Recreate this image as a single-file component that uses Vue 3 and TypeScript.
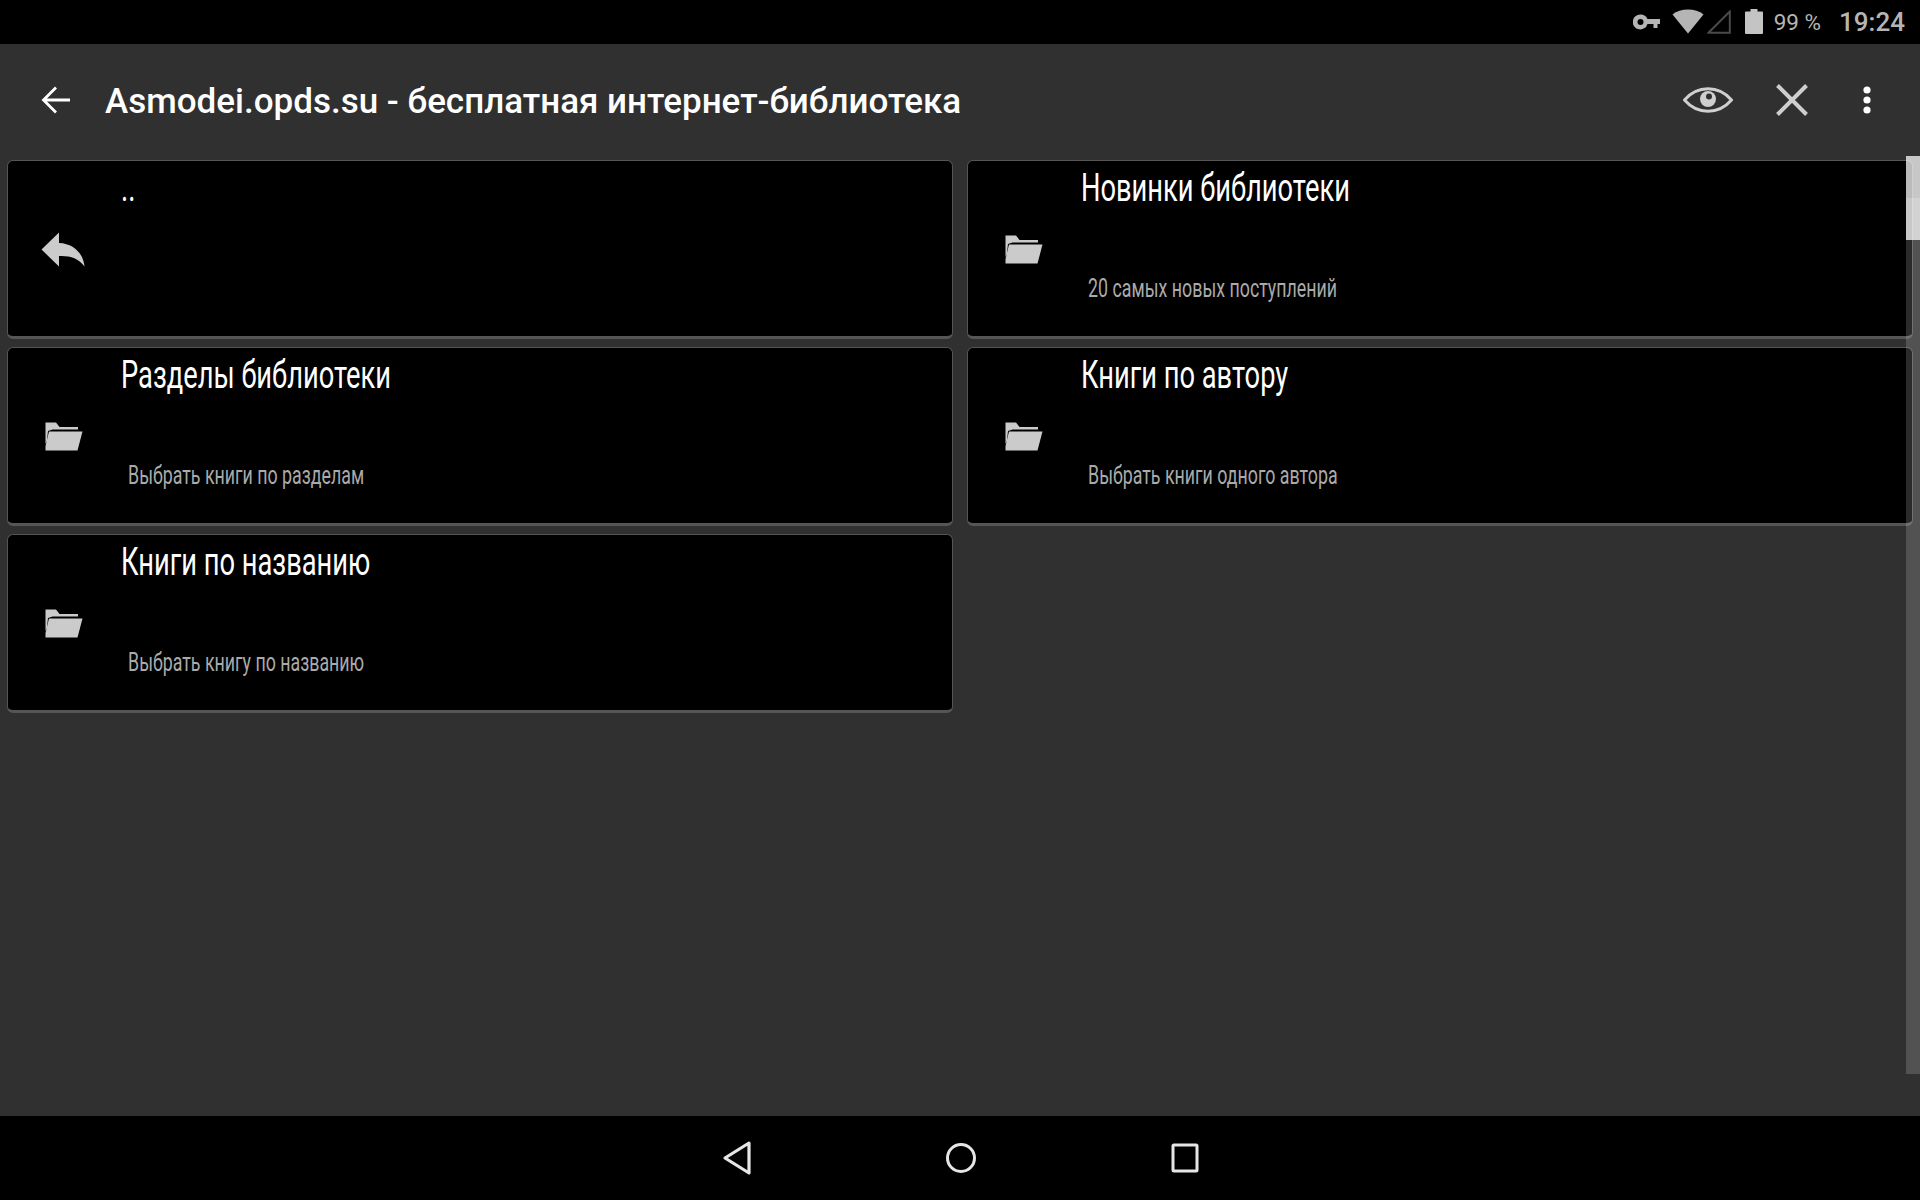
<script setup lang="ts">
interface Item { title: string; sub: string; icon: 'up' | 'folder' }
const items: Item[] = [
  { title: '..', sub: '', icon: 'up' },
  { title: 'Новинки библиотеки', sub: '20 самых новых поступлений', icon: 'folder' },
  { title: 'Разделы библиотеки', sub: 'Выбрать книги по разделам', icon: 'folder' },
  { title: 'Книги по автору', sub: 'Выбрать книги одного автора', icon: 'folder' },
  { title: 'Книги по названию', sub: 'Выбрать книгу по названию', icon: 'folder' },
]
</script>

<template>
  <div class="screen">
    <header class="status">
      <svg class="st key" width="28" height="16" viewBox="0 0 28 16"><path fill-rule="evenodd" d="M7.5 0.5a7.5 7.5 0 0 1 7 4.5H27v5h-2.500v4h-4v-4h-6a7.500 7.500 0 1 1-7-9.500zm0 4.500a3 3 0 1 0 0 6 3 3 0 0 0 0-6z" fill="#b5b5b5"/></svg>
      <svg class="st wifi" width="32" height="25" viewBox="0 0 32 25"><path d="M16 24.500 0.500 5.500C4.500 2.200 10 0.500 16 0.500s11.500 1.700 15.500 5z" fill="#b5b5b5"/></svg>
      <svg class="st signal" width="24" height="24" viewBox="0 0 24 24"><path d="M1.500 22.800 22.800 1.500v21.300z" fill="none" stroke="#4a4a4a" stroke-width="2"/></svg>
      <svg class="st batt" width="18" height="25" viewBox="0 0 18 25"><path d="M5.500 0h7v2.500H17a1 1 0 0 1 1 1V24a1 1 0 0 1-1 1H1a1 1 0 0 1-1-1V3.500a1 1 0 0 1 1-1h4.500z" fill="#c4c4c4"/></svg>
      <span class="pct">99 %</span>
      <span class="clock">19:24</span>
    </header>

    <div class="toolbar">
      <svg class="tb-back" width="30" height="30" viewBox="0 0 30 30"><path d="M29 15H3M15 2.500 2.500 15 15 27.500" fill="none" stroke="#fff" stroke-width="2.800"/></svg>
      <h1 class="title">Asmodei.opds.su - бесплатная интернет-библиотека</h1>
      <svg class="tb-eye" width="50" height="26" viewBox="0 0 50 26">
        <path d="M1.500 13C8 5.500 16 1.800 25 1.800S42 5.500 48.500 13C42 20.500 34 24.200 25 24.200S8 20.500 1.500 13z" fill="none" stroke="#cfcfcf" stroke-width="3"/>
        <circle cx="25" cy="12" r="8" fill="#cfcfcf"/>
        <circle cx="26" cy="9.500" r="3" fill="#303030"/>
      </svg>
      <svg class="tb-x" width="34" height="34" viewBox="0 0 34 34"><path d="M2.500 2.500 31.500 31.500M31.500 2.500 2.500 31.500" fill="none" stroke="#cfcfcf" stroke-width="4"/></svg>
      <svg class="tb-dots" width="8" height="28" viewBox="0 0 8 28"><circle cx="4" cy="4" r="3.600" fill="#fff"/><circle cx="4" cy="14" r="3.600" fill="#fff"/><circle cx="4" cy="24" r="3.600" fill="#fff"/></svg>
    </div>

    <main class="list">
      <section v-for="item in items" :key="item.title" class="card">
        <div class="icon-col">
          <svg v-if="item.icon === 'up'" class="ic-up" width="44" height="35" viewBox="0 0 44 35"><path d="M18 0.500 0.500 17.500 18 34.500V24C29 23.500 37 26 43.500 34.500 42.500 22 33 11.500 18 11z" fill="#cbcbcb"/></svg>
          <svg v-else class="ic-folder" width="38" height="29" viewBox="0 0 38 29"><path d="M0.500 0.500H11l3.500 4.500H33v2.500H7.500L3 9 1.800 19.500 0.500 22z" fill="#cbcbcb"/><path d="M0.500 28.500V24L4 9.500H37.500L32.500 28.500z" fill="#cbcbcb"/></svg>
        </div>
        <div class="text-col">
          <div class="c-title">{{ item.title }}</div>
          <div class="c-sub">{{ item.sub }}</div>
        </div>
      </section>
    </main>

    <nav class="nav">
      <svg width="30" height="36" viewBox="0 0 30 36"><path d="M27 3 3 18 27 33z" fill="none" stroke="#e6e6e6" stroke-width="3.200" stroke-linejoin="round"/></svg>
      <svg width="32" height="32" viewBox="0 0 32 32"><circle cx="16" cy="16" r="13.500" fill="none" stroke="#e6e6e6" stroke-width="3"/></svg>
      <svg width="28" height="30" viewBox="0 0 28 30"><rect x="2" y="2" width="24" height="26" rx="1" fill="none" stroke="#e6e6e6" stroke-width="3"/></svg>
    </nav>

    <div class="track"><div class="thumb"></div></div>
  </div>
</template>

<style>
html, body { margin: 0; background: #303030; }
</style>

<style scoped>
.screen {
  position: relative;
  width: 1920px;
  height: 1200px;
  display: flex;
  flex-direction: column;
  background: #303030;
  overflow: hidden;
  font-family: Roboto, "Noto Sans", sans-serif;
}
.status {
  height: 44px;
  background: #000;
  display: flex;
  align-items: center;
  justify-content: flex-end;
  padding-right: 15px;
  box-sizing: border-box;
  color: #b5b5b5;
}
.st { display: block; flex: none; }
.key { margin-right: 11px; }
.wifi { margin-right: 3px; margin-top: -2px; }
.signal { margin-right: 14px; margin-top: -1px; }
.batt { margin-right: 11px; margin-top: -1px; }
.pct { font-size: 22.500px; margin-right: 18px; }
.clock { font-size: 26px; font-weight: 500; }
.toolbar {
  height: 112px;
  display: flex;
  align-items: center;
  box-sizing: border-box;
  padding-left: 41px;
  flex: none;
}
.title {
  margin: 2px 0 0 34px;
  font-size: 35px;
  font-weight: 500;
  color: #fff;
  flex: 1;
  white-space: nowrap;
}
.tb-eye { margin-right: 42px; }
.tb-x { margin-right: 54px; }
.tb-dots { margin-right: 49px; }
.list {
  flex: 1;
  box-sizing: border-box;
  padding: 4px 7px 0 7px;
  display: grid;
  grid-template-columns: 946px 946px;
  column-gap: 14px;
  grid-auto-rows: 179px;
  row-gap: 8px;
  align-content: start;
}
.card {
  box-sizing: border-box;
  background: #000;
  border: 1px solid #555;
  border-bottom-width: 3px;
  border-radius: 6px;
  display: flex;
  min-width: 0;
}
.icon-col {
  width: 113px;
  flex: none;
  display: flex;
  align-items: center;
  box-sizing: border-box;
  padding-left: 37px;
}
.ic-up { margin-left: -4px; margin-top: 2px; }
.ic-folder { margin-top: 1px; }
.text-col {
  flex: 1;
  display: flex;
  flex-direction: column;
  justify-content: space-between;
  padding-bottom: 33px;
}
.c-title {
  font-size: 38px;
  line-height: 48px;
  padding-top: 3px;
  color: #fff;
  transform: scaleX(0.718);
  transform-origin: left center;
  white-space: nowrap;
}
.c-sub {
  font-size: 25px;
  line-height: 28px;
  color: #aaa;
  padding-left: 10px;
  transform: scaleX(0.712);
  transform-origin: left center;
  white-space: nowrap;
}
.nav {
  height: 84px;
  flex: none;
  background: #000;
  display: flex;
  align-items: center;
  box-sizing: border-box;
  padding-left: 722px;
  gap: 193px;
}
.nav svg:last-child { margin-left: 1px; }
.track {
  position: absolute;
  left: 1906px;
  top: 156px;
  width: 14px;
  height: 918px;
  background: rgba(255, 255, 255, 0.17);
}
.thumb {
  height: 84px;
  background: linear-gradient(rgba(255, 255, 255, 0.68) 50%, rgba(255, 255, 255, 0.74) 50%);
}
</style>
